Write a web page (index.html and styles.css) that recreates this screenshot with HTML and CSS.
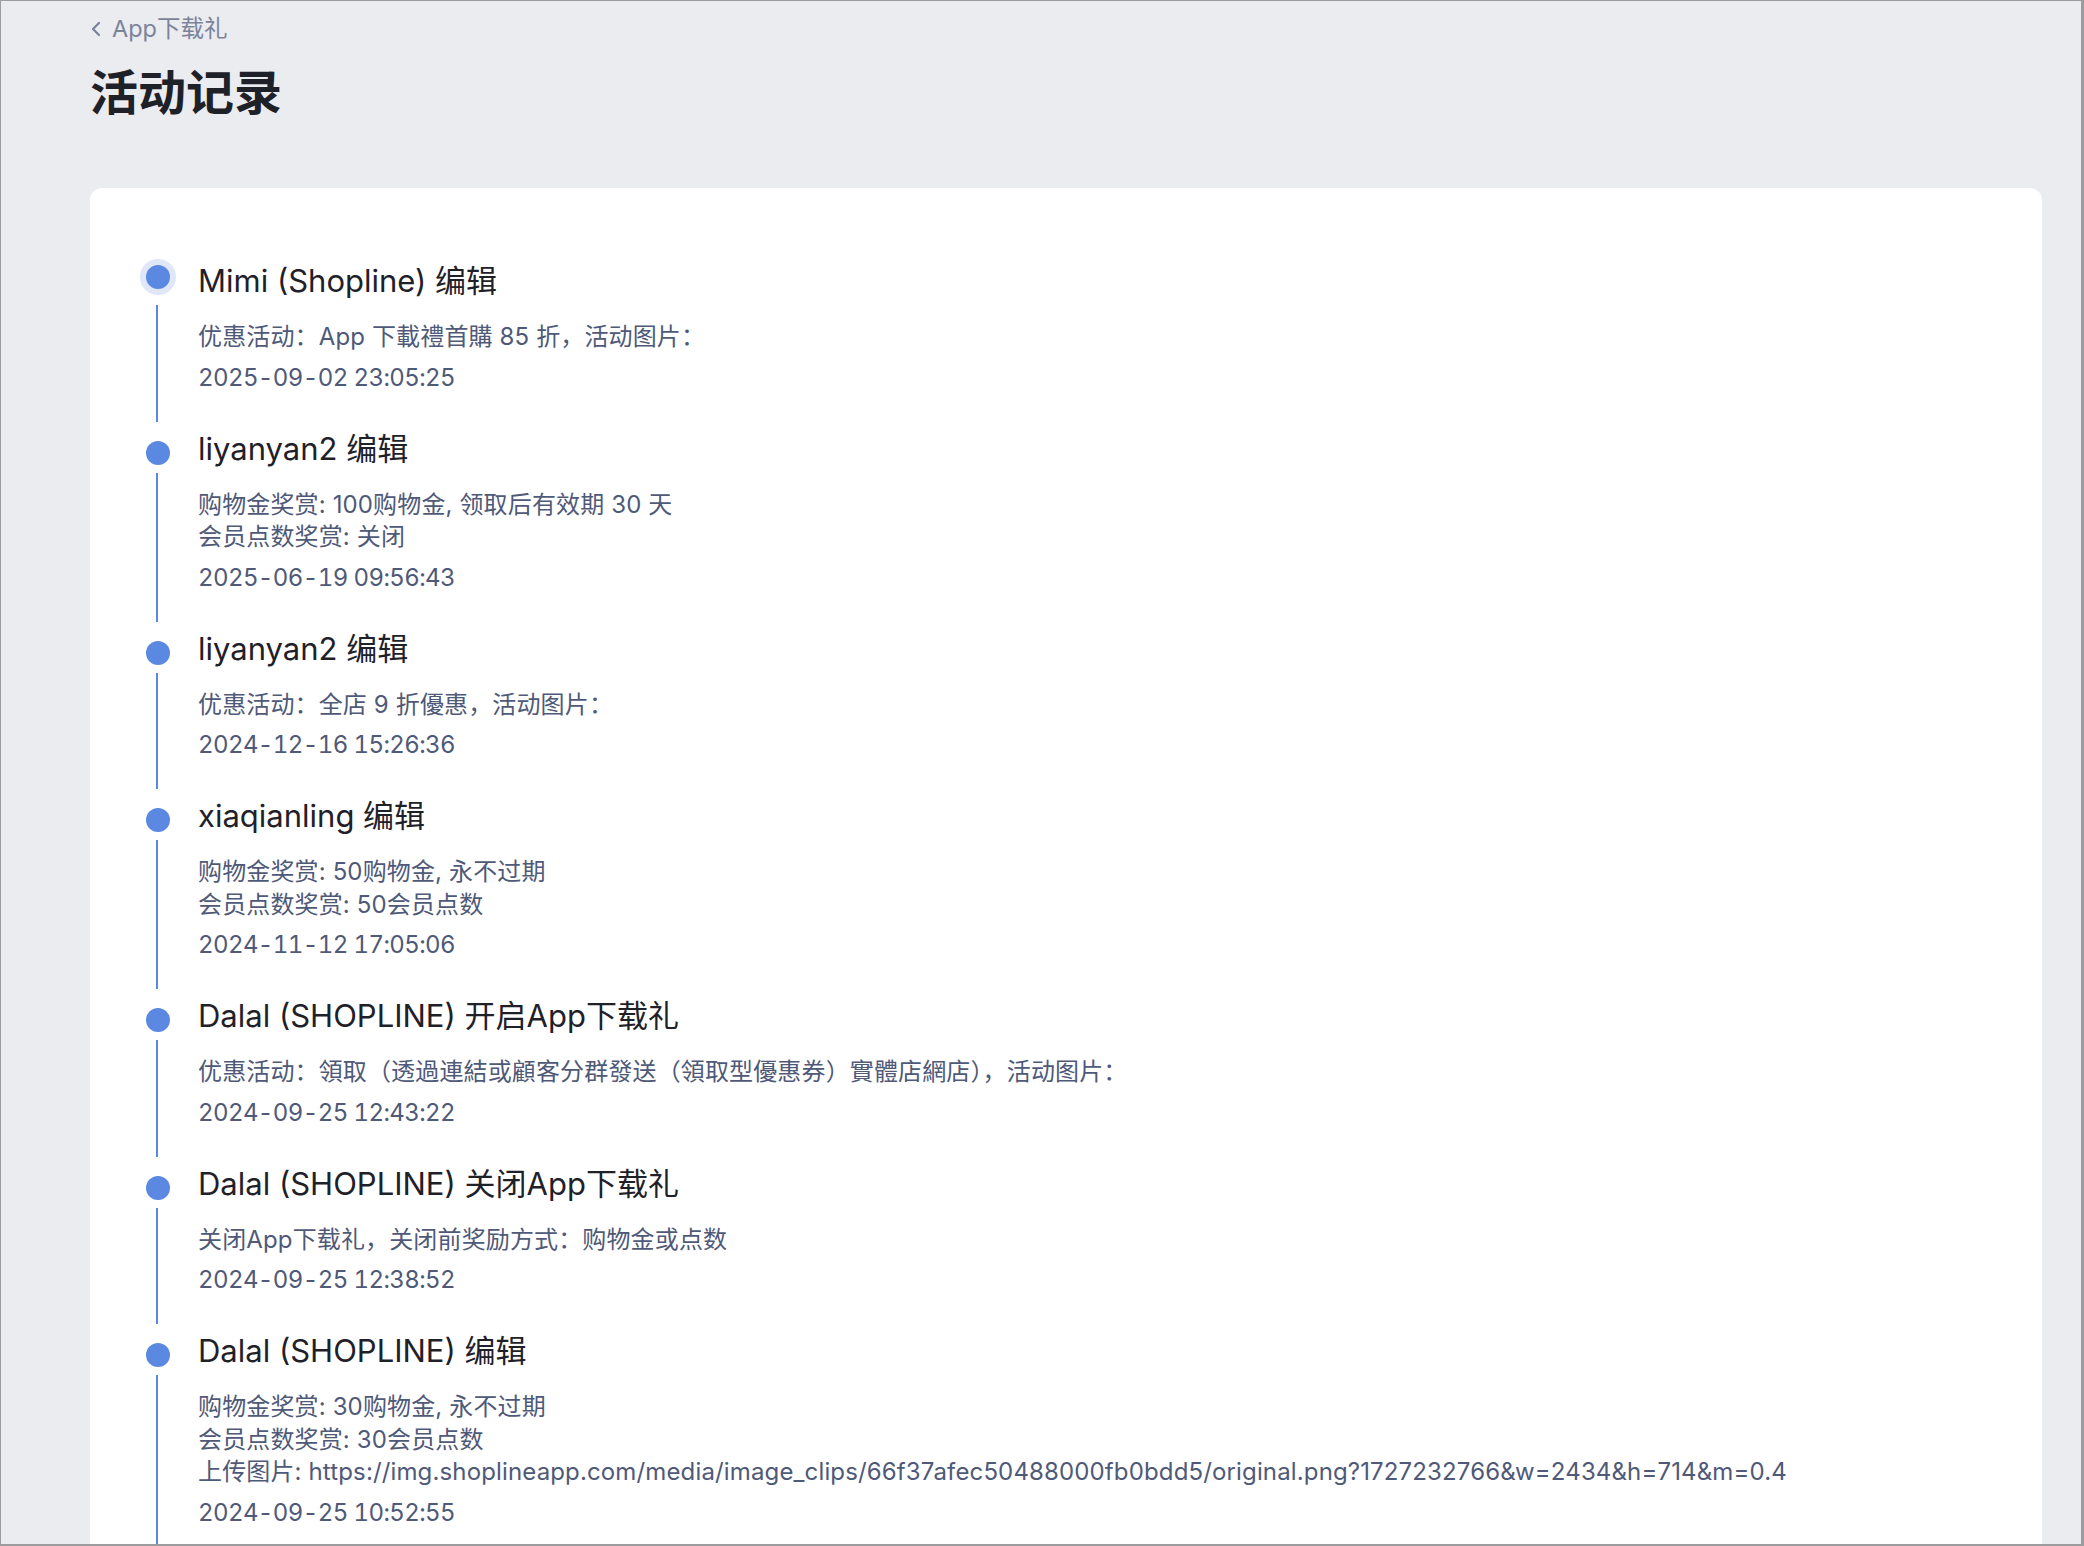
FILE: index.html
```html
<!DOCTYPE html>
<html lang="zh-CN">
<head>
    <meta charset="UTF-8">
    <meta name="viewport" content="width=device-width, initial-scale=1.0">
    <title>活动记录</title>
    <link rel="stylesheet" href="styles.css">
</head>
<body>
    <div class="page">
        <a class="back-link" href="#">
            <svg class="back-icon" width="12" height="18" viewBox="0 0 12 18">
                <polyline points="9,3 3,9 9,15" fill="none" stroke="currentColor" stroke-width="2.2" stroke-linecap="round" stroke-linejoin="round"/>
            </svg>
            App下载礼
        </a>
        <h1 class="page-title">活动记录</h1>

        <div class="card">
            <ul class="timeline">
                <li class="timeline-item is-current">
                    <span class="timeline-dot"></span>
                    <div class="timeline-title">Mimi (Shopline) 编辑</div>
                    <div class="timeline-desc">
                        <div>优惠活动：App 下載禮首購 85 折，活动图片：</div>
                    </div>
                    <div class="timeline-time">2025-09-02 23:05:25</div>
                </li>
                <li class="timeline-item">
                    <span class="timeline-dot"></span>
                    <div class="timeline-title">liyanyan2 编辑</div>
                    <div class="timeline-desc">
                        <div>购物金奖赏: 100购物金, 领取后有效期 30 天</div>
                        <div>会员点数奖赏: 关闭</div>
                    </div>
                    <div class="timeline-time">2025-06-19 09:56:43</div>
                </li>
                <li class="timeline-item">
                    <span class="timeline-dot"></span>
                    <div class="timeline-title">liyanyan2 编辑</div>
                    <div class="timeline-desc">
                        <div>优惠活动：全店 9 折優惠，活动图片：</div>
                    </div>
                    <div class="timeline-time">2024-12-16 15:26:36</div>
                </li>
                <li class="timeline-item">
                    <span class="timeline-dot"></span>
                    <div class="timeline-title">xiaqianling 编辑</div>
                    <div class="timeline-desc">
                        <div>购物金奖赏: 50购物金, 永不过期</div>
                        <div>会员点数奖赏: 50会员点数</div>
                    </div>
                    <div class="timeline-time">2024-11-12 17:05:06</div>
                </li>
                <li class="timeline-item">
                    <span class="timeline-dot"></span>
                    <div class="timeline-title">Dalal (SHOPLINE) 开启App下载礼</div>
                    <div class="timeline-desc">
                        <div>优惠活动：領取（透過連結或顧客分群發送（領取型優惠券）實體店網店），活动图片：</div>
                    </div>
                    <div class="timeline-time">2024-09-25 12:43:22</div>
                </li>
                <li class="timeline-item">
                    <span class="timeline-dot"></span>
                    <div class="timeline-title">Dalal (SHOPLINE) 关闭App下载礼</div>
                    <div class="timeline-desc">
                        <div>关闭App下载礼，关闭前奖励方式：购物金或点数</div>
                    </div>
                    <div class="timeline-time">2024-09-25 12:38:52</div>
                </li>
                <li class="timeline-item">
                    <span class="timeline-dot"></span>
                    <div class="timeline-title">Dalal (SHOPLINE) 编辑</div>
                    <div class="timeline-desc">
                        <div>购物金奖赏: 30购物金, 永不过期</div>
                        <div>会员点数奖赏: 30会员点数</div>
                        <div>上传图片: https://img.shoplineapp.com/media/image_clips/66f37afec50488000fb0bdd5/original.png?1727232766&amp;w=2434&amp;h=714&amp;m=0.4</div>
                    </div>
                    <div class="timeline-time">2024-09-25 10:52:55</div>
                </li>
            </ul>
        </div>
    </div>
</body>
</html>
```

FILE: styles.css
```css
html {
    overflow: hidden;
}

body {
    margin: 0;
    background-color: #ebecf0;
    font-family: Inter, "Noto Sans CJK SC", sans-serif;
    color: #1f2129;
}

/* grey frame round the window */
body::after {
    content: "";
    position: fixed;
    top: 0;
    left: 0;
    right: 0;
    bottom: 0;
    border-style: solid;
    border-color: #9c9c9e;
    border-width: 1px 3px 2px 1px;
    pointer-events: none;
}

.page {
    padding: 13px 42px 0 90px;
}

.back-link {
    display: inline-flex;
    align-items: center;
    gap: 10px;
    font-size: 23.5px;
    line-height: 32px;
    color: #7b8399;
    text-decoration: none;
}

.back-icon {
    display: block;
}

.page-title {
    margin: 16px 0 0;
    font-size: 48px;
    line-height: 64px;
    font-weight: 600;
    color: #1f2129;
}

.card {
    margin-top: 63px;
    background-color: #fff;
    border-radius: 12px;
    padding: 69px 50px 40px;
}

.timeline {
    list-style: none;
    margin: 0;
    padding: 0;
}

.timeline-item {
    position: relative;
    padding: 0 0 31px 58px;
}

.timeline-item::before {
    content: "";
    position: absolute;
    left: 16px;
    top: 48px;
    bottom: 3px;
    width: 2px;
    background-color: #5b88e0;
}

.timeline-dot {
    position: absolute;
    left: 6px;
    top: 16px;
    width: 24px;
    height: 24px;
    border-radius: 50%;
    background-color: #5b88e0;
}

.is-current .timeline-dot {
    top: 8px;
    box-shadow: 0 0 0 6px #e0e7f8;
}

.timeline-title {
    font-size: 31px;
    line-height: 48px;
    color: #1f2129;
}

.timeline-desc {
    margin-top: 16px;
    font-size: 24px;
    line-height: 32.5px;
    letter-spacing: 0.14px;
    color: #4f5978;
}

.timeline-time {
    margin-top: 8px;
    font-size: 24px;
    line-height: 32px;
    font-variant-numeric: tabular-nums;
    letter-spacing: -0.6px;
    color: #4f5978;
}
```
